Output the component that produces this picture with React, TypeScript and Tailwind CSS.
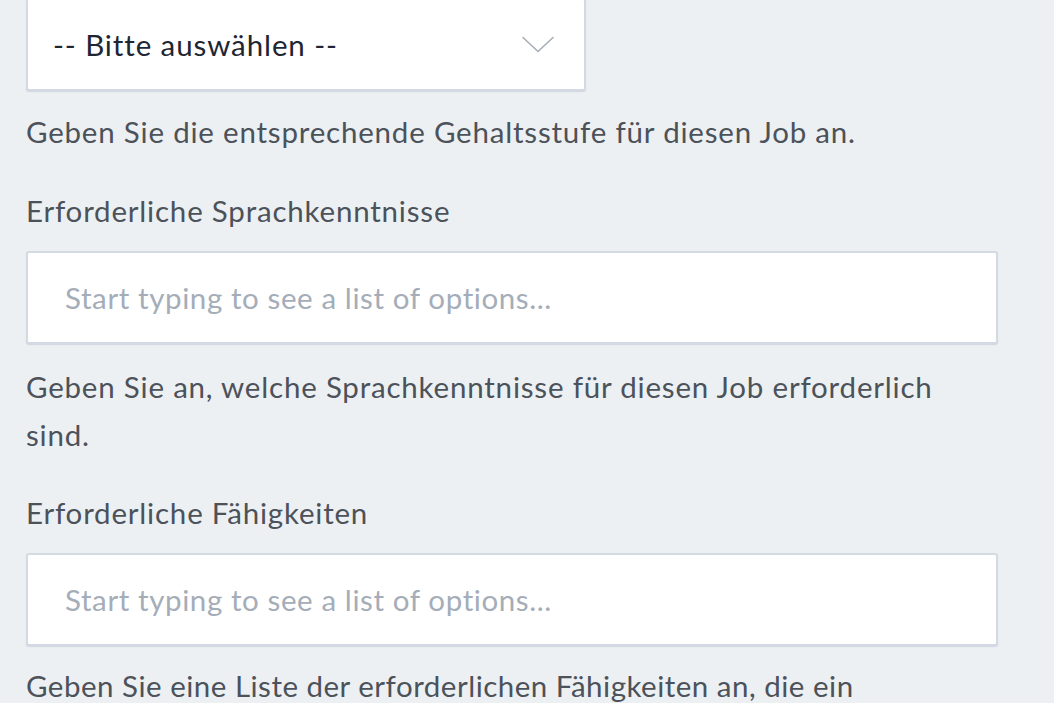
import React from "react";

function Chevron() {
  return (
    <svg width="32" height="17" viewBox="0 0 32 17" fill="none" className="shrink-0">
      <path d="M1 1.5 L16 15.5 L31 1.5" stroke="#a7aeb7" strokeWidth="1.6" strokeLinecap="round" strokeLinejoin="round" />
    </svg>
  );
}

export default function App() {
  const font = { fontFamily: "Lato, 'Open Sans', sans-serif" };
  return (
    <div className="w-[1054px] h-[703px] overflow-hidden bg-[#edf0f3]" style={font}>
      <div className="pl-[26px] -mt-[2px] flex flex-col items-start">
        <div className="w-[560px] h-[93px] bg-white border-2 border-[#d3dae3] rounded-[3px] shadow-[0_1px_1px_rgba(180,190,205,0.5)] flex items-center justify-between pl-[25px] pr-[30px]">
          <span className="text-[29.5px] tracking-[0.9px] text-[#1f2633] leading-none">-- Bitte auswählen --</span>
          <Chevron />
        </div>
        <p className="mt-[17px] text-[29.5px] tracking-[0.8px] leading-[47px] text-[#4c525a]">
          Geben Sie die entsprechende Gehaltsstufe für diesen Job an.
        </p>
        <p className="mt-[32px] text-[29.5px] tracking-[0.8px] leading-[47px] text-[#4c525a]">Erforderliche Sprachkenntnisse</p>
        <div className="mt-[17px] w-[972px] h-[93px] bg-white border-2 border-[#d3dae3] rounded-[3px] shadow-[0_1px_1px_rgba(180,190,205,0.5)] flex items-center pl-[37px]">
          <span className="text-[29.5px] tracking-[0.6px] text-[#a4adb8] leading-none">Start typing to see a list of options...</span>
        </div>
        <p className="mt-[19px] w-[972px] text-[29.5px] tracking-[0.8px] leading-[48px] text-[#4c525a]">
          Geben Sie an, welche Sprachkenntnisse für diesen Job erforderlich sind.
        </p>
        <p className="mt-[30px] text-[29.5px] tracking-[0.8px] leading-[47px] text-[#4c525a]">Erforderliche Fähigkeiten</p>
        <div className="mt-[17px] w-[972px] h-[93px] bg-white border-2 border-[#d3dae3] rounded-[3px] shadow-[0_1px_1px_rgba(180,190,205,0.5)] flex items-center pl-[37px]">
          <span className="text-[29.5px] tracking-[0.6px] text-[#a4adb8] leading-none">Start typing to see a list of options...</span>
        </div>
        <p className="mt-[16px] w-[900px] text-[29.5px] tracking-[0.5px] leading-[47px] text-[#4c525a]">
          Geben Sie eine Liste der erforderlichen Fähigkeiten an, die ein Bewerber für diesen Job haben sollte.
        </p>
      </div>
    </div>
  );
}
